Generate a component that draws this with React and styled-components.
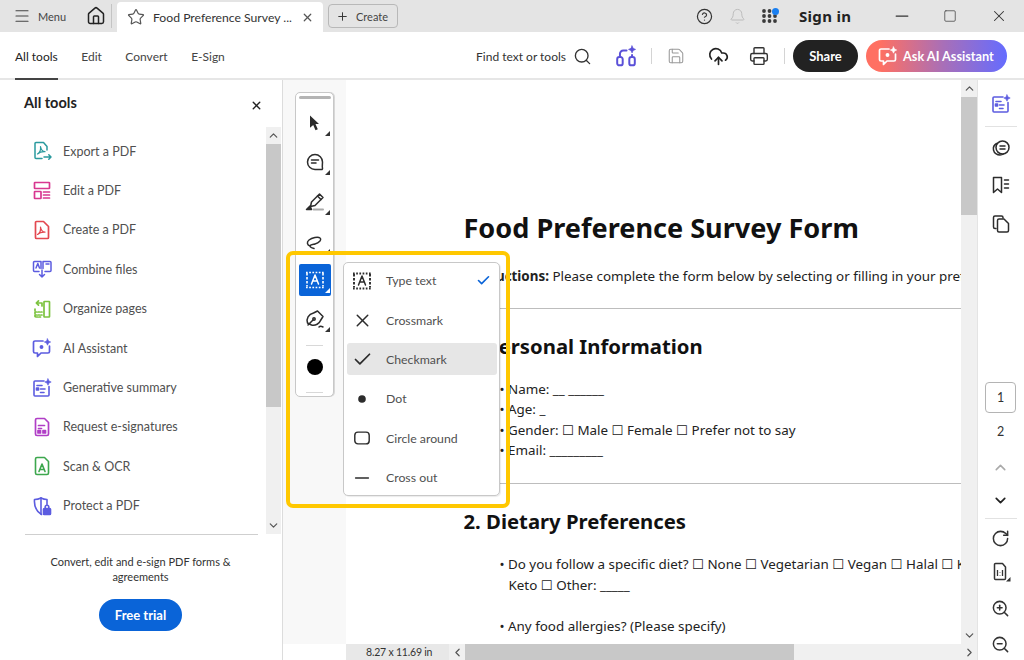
import React from 'react';
import styled, { createGlobalStyle } from 'styled-components';
import {
  Menu, Home, Star, X, Plus, CircleHelp, Bell, Minus, Square, Search, Save, CloudUpload, Printer,
  ChevronUp, ChevronDown, ChevronLeft, ChevronRight, RotateCw, ZoomIn, ZoomOut, Check,
} from 'lucide-react';

const UI = '"Lato", "Liberation Sans", sans-serif';
const DOC = '"Noto Sans", "DejaVu Sans", sans-serif';

const GlobalStyle = createGlobalStyle`
  html, body { margin: 0; padding: 0; height: 660px; overflow: hidden; background: #fff; }
  * { box-sizing: border-box; }
`;

const Page = styled.div`
  position: relative;
  width: 1024px;
  height: 660px;
  display: flex;
  flex-direction: column;
  overflow: hidden;
  font-family: ${UI};
  color: #2c2c2c;
`;

/* top grey bar */
const TitleBar = styled.div`
  height: 32px;
  flex: none;
  background: #e4e4e4;
  display: flex;
  align-items: center;
`;

const MenuButton = styled.div`
  display: flex;
  align-items: center;
  gap: 7px;
  padding-left: 13px;
  width: 86px;
  font-size: 11px;
  color: #444;
`;

const HomeSlot = styled.div`
  width: 26px;
  height: 24px;
  display: flex;
  align-items: center;
  justify-content: flex-end;
  padding-right: 5px;
  border-right: 1px solid #c4c4c4;
`;

const Tab = styled.div`
  margin: 2px 0 0 5px;
  width: 206px;
  height: 30px;
  background: #fff;
  border-radius: 4px 4px 0 0;
  display: flex;
  align-items: center;
  padding-left: 10px;
  font-size: 12.2px;
  color: #333;
`;

const TabTitle = styled.span`
  margin: 0 9px 0 8px;
  width: 139px;
  white-space: nowrap;
`;

const CreateButton = styled.div`
  margin-left: 5px;
  width: 70px;
  height: 24px;
  border: 1px solid #b8b8b8;
  border-radius: 4px;
  display: flex;
  align-items: center;
  padding-left: 7px;
  gap: 7px;
  font-size: 11px;
  color: #444;
`;

const TitleRight = styled.div`
  margin-left: auto;
  display: flex;
  align-items: center;
`;

const TitleIcon = styled.div`
  position: relative;
  width: ${({ $w }) => $w || 32}px;
  display: flex;
  justify-content: center;
`;

const BlueDot = styled.span`
  position: absolute;
  top: -1px;
  left: 18px;
  width: 7px;
  height: 7px;
  border-radius: 50%;
  background: #1a7ff0;
`;

const SignIn = styled.div`
  width: 94px;
  padding-left: 15px;
  font-family: ${DOC};
  font-weight: 700;
  font-size: 15px;
  letter-spacing: 0.3px;
  color: #222;
`;

/* second bar with tabs and actions */
const ToolBar = styled.div`
  height: 48px;
  flex: none;
  background: #fff;
  border-bottom: 2px solid #e6e6e6;
  display: flex;
  align-items: stretch;
  padding-left: 15px;
`;

const NavTab = styled.div`
  margin-right: 23.5px;
  display: flex;
  align-items: center;
  padding-top: 2px;
  font-size: 12px;
  color: ${({ $active }) => ($active ? '#222' : '#444')};
  ${({ $active }) => $active && 'box-shadow: 0 2px 0 #444;'}
`;

const ToolActions = styled.div`
  margin-left: auto;
  display: flex;
  align-items: center;
  padding: 2px 17px 0 0;
`;

const FindText = styled.span`
  font-size: 12px;
  color: #333;
  margin-right: 6px;
`;

const ActionIcon = styled.div`
  width: ${({ $w }) => $w || 41}px;
  margin-left: ${({ $gap }) => $gap || 0}px;
  display: flex;
  justify-content: center;
`;

const Sep = styled.div`
  width: 1px;
  height: 16px;
  flex: none;
  background: #d4d4d4;
`;

const ShareButton = styled.div`
  margin-left: 7px;
  width: 65px;
  height: 32px;
  border-radius: 16px;
  background: #222;
  color: #fff;
  font-weight: 700;
  font-size: 13px;
  display: flex;
  align-items: center;
  justify-content: center;
`;

const AskButton = styled.div`
  margin-left: 8px;
  width: 141px;
  height: 32px;
  border-radius: 16px;
  background: linear-gradient(90deg, #ff7062 0%, #ff7062 10%, #a86fb8 55%, #656cff 100%);
  color: #fff;
  font-weight: 700;
  font-size: 12.7px;
  display: flex;
  align-items: center;
  gap: 5px;
  padding-left: 12px;
`;

const Body = styled.div`
  flex: 1;
  min-height: 0;
  display: flex;
`;

/* left panel */
const Sidebar = styled.aside`
  width: 283px;
  flex: none;
  border-right: 1px solid #dcdcdc;
  display: flex;
  flex-direction: column;
  background: #fff;
`;

const SideHeader = styled.div`
  height: 47px;
  flex: none;
  display: flex;
  justify-content: space-between;
  padding: 14px 19px 0 24px;
  font-weight: 700;
  font-size: 14.5px;
  color: #222;
`;

const SideMiddle = styled.div`
  height: 408px;
  flex: none;
  display: flex;
  align-items: flex-start;
  padding-left: 25px;
`;

const ToolList = styled.div`
  width: 233px;
  height: 408px;
  padding-top: 4.5px;
  border-bottom: 1px solid #cfcfcf;
`;

const ToolItem = styled.div`
  height: 39.4px;
  display: flex;
  align-items: center;
  gap: 11px;
  padding-left: 7px;
  font-size: 12.5px;
  color: #505050;
`;

const SideScroll = styled.div`
  margin-left: 8px;
  width: 15px;
  height: 407px;
  background: #f0f0f0;
  display: flex;
  flex-direction: column;
  align-items: center;
  color: #555;
`;

const ScrollCap = styled.div`
  height: 17px;
  flex: none;
  display: flex;
  align-items: center;
  justify-content: center;
`;

const ScrollThumb = styled.div`
  width: 100%;
  height: ${({ $h }) => $h}px;
  flex: none;
  background: #c8c8c8;
`;

const Spacer = styled.div`
  flex: 1;
`;

const Promo = styled.div`
  padding: 19px 41px 0 40px;
  display: flex;
  flex-direction: column;
  align-items: center;
  text-align: center;
  font-size: 11px;
  line-height: 15px;
  color: #333;
`;

const TrialButton = styled.div`
  margin-top: 15px;
  width: 83px;
  height: 32px;
  border-radius: 16px;
  background: #0a64d8;
  color: #fff;
  font-size: 13px;
  font-weight: 700;
  display: flex;
  align-items: center;
  justify-content: center;
`;

/* centre */
const Canvas = styled.main`
  flex: 1;
  min-width: 0;
  display: flex;
  flex-direction: column;
`;

const CanvasTop = styled.div`
  flex: 1;
  min-height: 0;
  display: flex;
`;

const Gutter = styled.div`
  width: 63px;
  flex: none;
  background: #f8f8f8;
`;

const DocPage = styled.div`
  flex: 1;
  min-width: 0;
  overflow: hidden;
  background: #fff;
  padding: 130px 0 0 117.5px;
  font-family: ${DOC};
  font-size: 13.4px;
  color: #222;
`;

const DocTitle = styled.h1`
  margin: 0;
  font-size: 27.1px;
  line-height: 36px;
  font-weight: 700;
  color: #111;
  white-space: nowrap;
`;

const Intro = styled.p`
  margin: 20px 0 0;
  line-height: 20px;
  white-space: nowrap;
  b { font-weight: 700; }
`;

const Rule = styled.hr`
  margin: ${({ $top }) => $top}px 0 0;
  border: 0;
  border-top: 1px solid #bdbdbd;
`;

const DocHeading = styled.h2`
  margin: ${({ $top }) => $top}px 0 0;
  font-size: 20.3px;
  line-height: 28px;
  font-weight: 700;
  color: #111;
  white-space: nowrap;
`;

const DocList = styled.div`
  margin: ${({ $top }) => $top}px 0 0 36px;
`;

const DocLine = styled.div`
  line-height: 20.4px;
  margin-top: ${({ $top }) => $top || 0}px;
  padding-left: ${({ $indent }) => $indent || 0}px;
  white-space: nowrap;
`;

const VScroll = styled.div`
  width: 16px;
  flex: none;
  background: #f0f0f0;
  display: flex;
  flex-direction: column;
  align-items: center;
  color: #555;
`;

const HScroll = styled.div`
  height: 16px;
  flex: none;
  margin-left: 63px;
  background: #f0f0f0;
  display: flex;
  align-items: center;
  color: #555;
`;

const PageSize = styled.div`
  width: 103px;
  height: 100%;
  flex: none;
  background: #e8e8e8;
  padding-left: 20px;
  font-size: 10.5px;
  letter-spacing: -0.2px;
  line-height: 16px;
  color: #333;
  white-space: nowrap;
`;

const HCap = styled.div`
  width: 16px;
  height: 100%;
  flex: none;
  display: flex;
  align-items: center;
  justify-content: center;
`;

const HThumb = styled.div`
  width: 329px;
  height: 100%;
  flex: none;
  background: #c8c8c8;
`;

/* right rail */
const Rail = styled.aside`
  width: 47px;
  flex: none;
  border-left: 1px solid #e4e4e4;
  background: #fff;
  display: flex;
  flex-direction: column;
  align-items: center;
  padding-right: 1px;
`;

const RailIcon = styled.div`
  height: ${({ $h }) => $h || 38}px;
  padding-top: ${({ $pt }) => $pt || 0}px;
  flex: none;
  display: flex;
  align-items: center;
  justify-content: center;
`;

const RailSep = styled.div`
  width: 32px;
  height: 1px;
  flex: none;
  margin-top: ${({ $top }) => $top || 0}px;
  background: #e2e2e2;
`;

const PageBox = styled.div`
  margin-top: ${({ $top }) => $top}px;
  width: 31px;
  height: 31px;
  flex: none;
  border: 1px solid #b4b4b4;
  border-radius: 4px;
  display: flex;
  align-items: center;
  justify-content: center;
  font-size: 12.5px;
  color: #333;
`;

const PageNum = styled.div`
  height: 36px;
  flex: none;
  display: flex;
  align-items: center;
  font-size: 12.5px;
  color: #333;
`;

/* floating parts over the document */
const Palette = styled.div`
  position: absolute;
  left: 295px;
  top: 92px;
  width: 39px;
  height: 305px;
  background: #fff;
  border: 1px solid #c8c8c8;
  border-radius: 5px;
  box-shadow: 1px 0 0 #d8d8d8;
  display: flex;
  flex-direction: column;
  align-items: center;
  padding-top: 3px;
`;

const Grip = styled.div`
  width: 32px;
  height: 3px;
  flex: none;
  border-radius: 2px;
  background: #b4b4b4;
  margin-bottom: 8px;
`;

const PaletteItem = styled.div`
  position: relative;
  width: 32px;
  height: 32px;
  flex: none;
  margin-bottom: 7.3px;
  border-radius: 2px;
  display: flex;
  align-items: center;
  justify-content: center;
  color: ${({ $active }) => ($active ? '#fff' : '#2c2c2c')};
  background: ${({ $active }) => ($active ? '#0a64d8' : 'transparent')};
  ${({ $more, $active }) =>
    $more &&
    `&::after {
      content: '';
      position: absolute;
      right: 1px;
      bottom: 3px;
      border-style: solid;
      border-width: 0 0 5px 5px;
      border-color: transparent transparent ${$active ? '#fff' : '#333'} transparent;
    }`}
`;

const PaletteSep = styled.div`
  width: 17px;
  height: 1px;
  flex: none;
  background: #d8d8d8;
  margin: ${({ $top, $bottom }) => `${$top}px 0 ${$bottom}px`};
`;

const ColorDot = styled.div`
  width: 16px;
  height: 16px;
  flex: none;
  border-radius: 50%;
  background: #000;
`;

const Flyout = styled.div`
  position: absolute;
  left: 343px;
  top: 262px;
  width: 157px;
  height: 234px;
  background: #fff;
  border: 1px solid #c8c8c8;
  border-radius: 5px;
  box-shadow: 1px 1px 1px rgba(0, 0, 0, 0.08);
  padding: 0 2px 0 3px;
`;

const FlyRow = styled.div`
  height: 35.4px;
  margin-bottom: 4px;
  display: flex;
  align-items: center;
`;

const FlyInner = styled.div`
  width: 100%;
  height: 32px;
  border-radius: 3px;
  background: ${({ $hover }) => ($hover ? '#e6e6e6' : 'transparent')};
  display: flex;
  align-items: center;
  font-size: 12.3px;
  color: #505050;
`;

const FlyIcon = styled.div`
  width: 39px;
  flex: none;
  padding-right: 9px;
  display: flex;
  justify-content: center;
  color: #2c2c2c;
`;

const FlyTick = styled.div`
  margin-left: auto;
  margin-right: 6px;
  display: flex;
  color: #0a64d8;
`;

const Highlight = styled.div`
  position: absolute;
  left: 286px;
  top: 251px;
  width: 224px;
  height: 257px;
  border: 4px solid #ffc800;
  border-radius: 7px;
  pointer-events: none;
`;

/* custom drawings */
const Svg = ({ size = 20, box = 20, color = 'currentColor', sw = 1.5, children }) => (
  <svg width={size} height={size} viewBox={`0 0 ${box} ${box}`} fill="none" stroke={color} strokeWidth={sw} strokeLinecap="round" strokeLinejoin="round">
    {children}
  </svg>
);

const Spark = ({ color, x = 15.5, y = 3.5 }) => (
  <path d={`M${x} ${y - 3.2}l1 2.2 2.2 1-2.2 1-1 2.2-1-2.2-2.2-1 2.2-1z`} fill={color} stroke={color} strokeWidth="0.6" />
);

const Acro = ({ color, dx = 0, dy = 0 }) => (
  <path transform={`translate(${dx} ${dy})`} d="M5.5 14c1.8-1 3.4-4.2 3-7.5.4 2.8 2 4.8 4.5 5.2-2.8-.2-5.500.6-7.500 2.3z" stroke={color} strokeWidth="1.2" />
);

const ExportIcon = () => (
  <Svg color="#2a9a9e">
    <path d="M15 9V5.5L11.5 1.5H4a1 1 0 0 0-1 1v14a1 1 0 0 0 1 1h6" />
    <Acro color="#2a9a9e" dy="-1" />
    <path d="M12 16h7m-2.200-2.200L19 16l-2.200 2.200" />
  </Svg>
);

const EditIcon = () => (
  <Svg color="#d83790" sw={1.7}>
    <rect x="2.5" y="1.5" width="15" height="6" rx="0.5" />
    <rect x="2.5" y="10.5" width="6.5" height="7" rx="0.5" />
    <path d="M11.5 11h6M11.5 14h6M11.5 17h6" />
  </Svg>
);

const CreateIcon = () => (
  <Svg color="#e34850" sw={1.7}>
    <path d="M11.5 1.5H4.500a1 1 0 0 0-1 1v15a1 1 0 0 0 1 1h11a1 1 0 0 0 1-1V6.500z" />
    <Acro color="#e34850" dy="0.5" />
  </Svg>
);

const CombineIcon = () => (
  <Svg color="#5c5ce0">
    <path d="M7 12.5H2.500a1 1 0 0 1-1-1v-8a1 1 0 0 1 1-1H9v7" />
    <path d="M13 12.5h5a1 1 0 0 0 1-1v-8a1 1 0 0 0-1-1h-7v7" />
    <path d="M10 11v7m-2.500-2.500L10 18l2.500-2.500" />
    <path d="M4 9l1.800-4.500L7.500 9M14 5h3" />
  </Svg>
);

const OrganizeIcon = () => (
  <Svg color="#7cc33f" sw={1.7}>
    <rect x="12" y="2.5" width="5.5" height="15.5" rx="0.5" />
    <path d="M3 10v8h7M3 13h7M3 16h7" strokeDasharray="1.5 1.5" />
    <path d="M10 7V4H4.500m2-2.200L4.300 4l2.200 2.200" />
  </Svg>
);

const AssistantIcon = ({ color = '#5c5ce0', size = 20 }) => (
  <Svg color={color} size={size} sw={1.7}>
    <path d="M11 3H3a1.500 1.500 0 0 0-1.500 1.500v9A1.500 1.500 0 0 0 3 15h2.500v3.500L9 15h7a1.500 1.500 0 0 0 1.500-1.500V8" />
    <circle cx="9.5" cy="9" r="1.1" fill={color} />
    <Spark color={color} y={4} />
  </Svg>
);

const SummaryIcon = () => (
  <Svg color="#5c5ce0" sw={1.6}>
    <path d="M12 3H3a1 1 0 0 0-1 1v13a1 1 0 0 0 1 1h13a1 1 0 0 0 1-1V8.500" />
    <path d="M5 7.5h5M8.5 11H13M8.5 14.5H12" />
    <rect x="4.5" y="10" width="2" height="2" fill="#5c5ce0" />
    <Spark color="#5c5ce0" x={16} y={4} />
  </Svg>
);

const SignatureIcon = () => (
  <Svg color="#b03ec6" sw={1.7}>
    <path d="M12.5 1.5H5a1.500 1.500 0 0 0-1.500 1.500v14A1.500 1.500 0 0 0 5 18.500h10a1.500 1.500 0 0 0 1.500-1.500V5.500z" />
    <path d="M6.5 8.5h6M6.5 11.5h3" />
    <rect x="6" y="13.5" width="2.5" height="2.5" fill="#b03ec6" />
    <rect x="11" y="13.5" width="2.5" height="2.5" fill="#b03ec6" />
  </Svg>
);

const ScanIcon = () => (
  <Svg color="#3da74e" sw={1.6}>
    <path d="M12.5 1.5H5a1.500 1.500 0 0 0-1.500 1.500v14A1.500 1.500 0 0 0 5 18.500h10a1.500 1.500 0 0 0 1.500-1.500V5.500z" />
    <path d="M7 15.5l3-7.500 3 7.500M8 13.5h4" />
  </Svg>
);

const ProtectIcon = () => (
  <Svg color="#5c5ce0" sw={1.6}>
    <path d="M9 2C7 3 4.500 3.500 2.500 3.500 2 10 3.500 15 9.500 18.500" />
    <path d="M9 2c2 1 4 1.500 6 1.500v5" />
    <path d="M9 2v16" />
    <rect x="11.5" y="12.5" width="7" height="6" rx="0.8" fill="#5c5ce0" />
    <path d="M13.2 12.5v-1.500a1.800 1.800 0 0 1 3.600 0v1.500" />
  </Svg>
);

const AiToolsIcon = () => (
  <Svg color="#5a50d8" size={22} sw={1.8}>
    <rect x="2" y="11" width="5" height="7.5" rx="2" />
    <rect x="13" y="11" width="5" height="7.5" rx="2" />
    <path d="M4.5 11V8a3 3 0 0 1 3-3h3M15.500 11V9" />
    <Spark color="#5a50d8" x={15.5} y={4} />
  </Svg>
);

const AppsIcon = () => (
  <svg width="15" height="14" viewBox="0 0 15 14" fill="#3a3a3a">
    {[2, 7, 12].flatMap((y) =>
      [2, 7.5, 13].map((x) => (x === 13 && y === 2 ? null : <circle key={`${x}-${y}`} cx={x} cy={y} r="1.9" />)),
    )}
  </svg>
);

const ArrowIcon = () => (
  <svg width="16" height="18" viewBox="0 0 16 18" fill="#2c2c2c"><path d="M3 1.500l9 8.500H8.500l2.300 5.200-2.300 1L6.200 11 3 13.800z" /></svg>
);

const CommentIcon = () => (
  <Svg size={20}>
    <path d="M10 2.500a7.500 7.500 0 0 0-7.500 7.500c0 4.200 3.300 7.500 7.500 7.500h6.500c.8 0 1.200-.8 1-1.500-.5-1.300 0-3.500 0-6A7.500 7.500 0 0 0 10 2.500z" />
    <path d="M6.500 8h7M6.500 11h4.500" />
  </Svg>
);

const PenIcon = () => (
  <Svg size={20}>
    <path d="M14.500 2l3.500 3.500-8 8-4.500 1 1-4.500z" />
    <path d="M12.500 4l3.500 3.500" />
    <path d="M1.500 17.500l3.500-3.500 1.500 3.500z" fill="currentColor" />
    <path d="M8.500 17.500h9.500" stroke="#aaa" strokeWidth="2" />
  </Svg>
);

const LassoIcon = () => (
  <Svg size={20}>
    <path d="M5 15c-3-1-3.500-4-1-6 3-2.300 9-3.500 11-2 2 1.600-1 5-5 6-2 .5-5 .8-5 2 0 1.500 2 2 4 2.500" />
  </Svg>
);

const TypeTextIcon = ({ size = 20, sw = 1.9 }) => (
  <Svg size={size} sw={sw}>
    <path d="M2 3v13.500" strokeDasharray="2.500 1.500" strokeLinecap="butt" />
    <path d="M18 3v13.500" strokeDasharray="2.500 1.500" strokeLinecap="butt" />
    <path d="M1 2.500h18M1 17.500h18" strokeDasharray="1.700 1.500" strokeLinecap="butt" />
    <path d="M6.500 14l3.500-9 3.500 9M7.700 11h4.600" strokeWidth="1.500" />
  </Svg>
);

const SignPenIcon = () => (
  <Svg size={20}>
    <path d="M2.500 14c-1.500-4 1-9 6-10l4-2 5.500 5.500-2.500 4c-1 3-5 5.500-9 4.500z" />
    <path d="M3 16l5-5" />
    <circle cx="9" cy="10" r="1.2" />
    <path d="M14 18c1-1 2-1 4 0" />
  </Svg>
);

const RoundBoxIcon = () => (
  <Svg size={18}><rect x="2" y="3.5" width="16" height="13" rx="3.5" strokeWidth="1.6" /></Svg>
);

const StackIcon = () => (
  <Svg size={20}>
    <circle cx="11.5" cy="9.5" r="6.5" />
    <path d="M9 8h5M9 11h5" />
    <path d="M5.500 5.500C3 7 2 9.500 2.500 12c.6 3 3.500 5 6.500 5 1.500 0 2.500-.3 3.500-1" />
  </Svg>
);

const BookmarkIcon = () => (
  <Svg size={20}>
    <path d="M2.500 2.500h8v15L6.500 14l-4 3.500z" />
    <path d="M13.500 5h4M13.500 9h4M13.500 13h4" />
  </Svg>
);

const PagesIcon = () => (
  <Svg size={20}>
    <path d="M5 14.500H4a1.500 1.500 0 0 1-1.500-1.500V3.500A1.500 1.500 0 0 1 4 2h6.500A1.500 1.500 0 0 1 12 3.500V4" />
    <path d="M13 5H8a1.500 1.500 0 0 0-1.500 1.500v10A1.500 1.500 0 0 0 8 18h8a1.500 1.500 0 0 0 1.500-1.500V9.500z" />
  </Svg>
);

const ActualSizeIcon = () => (
  <svg width="20" height="20" viewBox="0 0 20 20" fill="none" stroke="#333" strokeWidth="1.5" strokeLinejoin="round">
    <path d="M11.5 1.5H4.500a1 1 0 0 0-1 1v14a1 1 0 0 0 1 1h9a1 1 0 0 0 1-1V5z" />
    <path d="M6.500 8v6M9 10v.5M9 13v.5M11.500 8v6" strokeWidth="1.3" />
    <path d="M15 19.500h4.500V15z" fill="#333" stroke="none" />
  </svg>
);

const tools = [
  ['Export a PDF', ExportIcon],
  ['Edit a PDF', EditIcon],
  ['Create a PDF', CreateIcon],
  ['Combine files', CombineIcon],
  ['Organize pages', OrganizeIcon],
  ['AI Assistant', AssistantIcon],
  ['Generative summary', SummaryIcon],
  ['Request e-signatures', SignatureIcon],
  ['Scan & OCR', ScanIcon],
  ['Protect a PDF', ProtectIcon],
];

const marks = [
  { label: 'Type text', icon: <TypeTextIcon />, picked: true },
  { label: 'Crossmark', icon: <X size={21} strokeWidth={1.7} /> },
  { label: 'Checkmark', icon: <Check size={21} strokeWidth={2} />, hover: true },
  { label: 'Dot', icon: <svg width="10" height="10"><circle cx="5" cy="5" r="3.8" fill="#2c2c2c" /></svg> },
  { label: 'Circle around', icon: <RoundBoxIcon /> },
  { label: 'Cross out', icon: <Minus size={22} strokeWidth={1.5} /> },
];

export default function App() {
  return (
    <Page>
      <GlobalStyle />
      <TitleBar>
        <MenuButton><Menu size={18} strokeWidth={1.5} />Menu</MenuButton>
        <HomeSlot><Home size={20} strokeWidth={1.8} color="#222" /></HomeSlot>
        <Tab>
          <Star size={18} strokeWidth={1.6} color="#555" />
          <TabTitle>Food Preference Survey ...</TabTitle>
          <X size={13} strokeWidth={2.2} color="#555" />
        </Tab>
        <CreateButton><Plus size={13} strokeWidth={1.8} color="#333" />Create</CreateButton>
        <TitleRight>
          <TitleIcon><CircleHelp size={17} strokeWidth={1.7} color="#333" /></TitleIcon>
          <TitleIcon $w={34}><Bell size={17} strokeWidth={1.4} color="#bbb" /></TitleIcon>
          <TitleIcon $w={30}><AppsIcon /><BlueDot /></TitleIcon>
          <SignIn>Sign in</SignIn>
          <TitleIcon $w={48}><Minus size={20} strokeWidth={1.5} color="#333" /></TitleIcon>
          <TitleIcon $w={48}><Square size={14} strokeWidth={1.3} color="#444" /></TitleIcon>
          <TitleIcon $w={50}><X size={18} strokeWidth={1.4} color="#333" /></TitleIcon>
        </TitleRight>
      </TitleBar>

      <ToolBar>
        <NavTab $active>All tools</NavTab>
        <NavTab>Edit</NavTab>
        <NavTab>Convert</NavTab>
        <NavTab>E-Sign</NavTab>
        <ToolActions>
          <FindText>Find text or tools</FindText>
          <ActionIcon $w={20}><Search size={19} strokeWidth={1.7} color="#333" /></ActionIcon>
          <ActionIcon $w={48} $gap={10}><AiToolsIcon /></ActionIcon>
          <ActionIcon $w={2}><Sep /></ActionIcon>
          <ActionIcon $w={48}><Save size={18} strokeWidth={1.4} color="#999" /></ActionIcon>
          <ActionIcon $w={36}><CloudUpload size={21} strokeWidth={1.9} color="#222" /></ActionIcon>
          <ActionIcon $w={46}><Printer size={20} strokeWidth={1.7} color="#333" /></ActionIcon>
          <ActionIcon $w={4}><Sep /></ActionIcon>
          <ShareButton>Share</ShareButton>
          <AskButton><AssistantIcon color="#fff" size={20} />Ask AI Assistant</AskButton>
        </ToolActions>
      </ToolBar>

      <Body>
        <Sidebar>
          <SideHeader>All tools<X size={13} strokeWidth={2.6} color="#222" style={{ marginTop: 5 }} /></SideHeader>
          <SideMiddle>
            <ToolList>
              {tools.map(([label, Icon]) => (
                <ToolItem key={label}><Icon />{label}</ToolItem>
              ))}
            </ToolList>
            <SideScroll>
              <ScrollCap><ChevronUp size={13} strokeWidth={2.2} /></ScrollCap>
              <ScrollThumb $h={263} />
              <Spacer />
              <ScrollCap><ChevronDown size={13} strokeWidth={2.2} /></ScrollCap>
            </SideScroll>
          </SideMiddle>
          <Promo>
            Convert, edit and e-sign PDF forms &amp; agreements
            <TrialButton>Free trial</TrialButton>
          </Promo>
        </Sidebar>

        <Canvas>
          <CanvasTop>
            <Gutter />
            <DocPage>
              <DocTitle>Food Preference Survey Form</DocTitle>
              <Intro><b>Instructions:</b> Please complete the form below by selecting or filling in your preferences.</Intro>
              <Rule $top={22} />
              <DocHeading $top={23}>1. Personal Information</DocHeading>
              <DocList $top={19}>
                <DocLine>• Name: __ ______</DocLine>
                <DocLine>• Age: _</DocLine>
                <DocLine>• Gender: ☐ Male ☐ Female ☐ Prefer not to say</DocLine>
                <DocLine>• Email: _________</DocLine>
              </DocList>
              <Rule $top={22} />
              <DocHeading $top={23}>2. Dietary Preferences</DocHeading>
              <DocList $top={19}>
                <DocLine>• Do you follow a specific diet? ☐ None ☐ Vegetarian ☐ Vegan ☐ Halal ☐ Kosher</DocLine>
                <DocLine $indent={9} $top={1}>Keto ☐ Other: _____</DocLine>
                <DocLine $top={21}>• Any food allergies? (Please specify)</DocLine>
              </DocList>
            </DocPage>
            <VScroll>
              <ScrollCap><ChevronUp size={13} strokeWidth={2.2} /></ScrollCap>
              <ScrollThumb $h={118} />
              <Spacer />
              <ScrollCap><ChevronDown size={13} strokeWidth={2.2} /></ScrollCap>
            </VScroll>
          </CanvasTop>
          <HScroll>
            <PageSize>8.27 x 11.69 in</PageSize>
            <HCap><ChevronLeft size={13} strokeWidth={2.2} /></HCap>
            <HThumb />
            <Spacer />
            <HCap><ChevronRight size={13} strokeWidth={2.2} /></HCap>
          </HScroll>
        </Canvas>

        <Rail>
          <RailIcon $h={46} $pt={2}><SummaryIcon /></RailIcon>
          <RailSep />
          <RailIcon $h={42}><StackIcon /></RailIcon>
          <RailIcon $h={32}><BookmarkIcon /></RailIcon>
          <RailIcon $h={46}><PagesIcon /></RailIcon>
          <PageBox $top={135}>1</PageBox>
          <PageNum>2</PageNum>
          <RailIcon $h={36}><ChevronUp size={17} strokeWidth={2.2} color="#aaa" /></RailIcon>
          <RailIcon $h={30}><ChevronDown size={17} strokeWidth={2.4} color="#222" /></RailIcon>
          <RailSep $top={3} />
          <RailIcon><RotateCw size={19} strokeWidth={1.9} color="#333" /></RailIcon>
          <RailIcon $h={30}><ActualSizeIcon /></RailIcon>
          <RailIcon $h={42}><ZoomIn size={19} strokeWidth={1.9} color="#333" /></RailIcon>
          <RailIcon $h={30}><ZoomOut size={19} strokeWidth={1.9} color="#333" /></RailIcon>
        </Rail>
      </Body>

      <Palette>
        <Grip />
        <PaletteItem $more><ArrowIcon /></PaletteItem>
        <PaletteItem $more><CommentIcon /></PaletteItem>
        <PaletteItem $more><PenIcon /></PaletteItem>
        <PaletteItem $more><LassoIcon /></PaletteItem>
        <PaletteItem $more $active><TypeTextIcon size={20} sw={1.6} /></PaletteItem>
        <PaletteItem $more><SignPenIcon /></PaletteItem>
        <PaletteSep $top={2} $bottom={13} />
        <ColorDot />
        <PaletteSep $top={17} $bottom={0} />
      </Palette>

      <Flyout>
        {marks.map((m) => (
          <FlyRow key={m.label}>
            <FlyInner $hover={m.hover}>
              <FlyIcon>{m.icon}</FlyIcon>
              {m.label}
              {m.picked && <FlyTick><Check size={15} strokeWidth={2.6} /></FlyTick>}
            </FlyInner>
          </FlyRow>
        ))}
      </Flyout>

      <Highlight />
    </Page>
  );
}
